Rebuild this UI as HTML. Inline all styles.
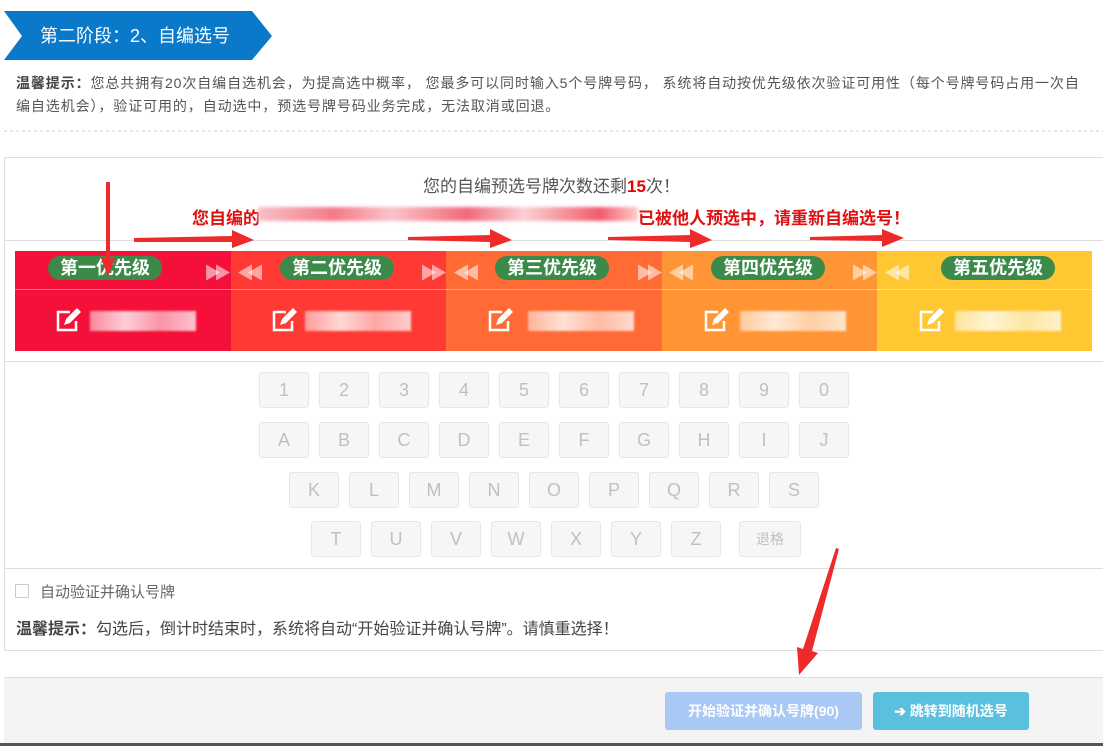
<!DOCTYPE html>
<html><head><meta charset="utf-8"><style>
*{margin:0;padding:0;box-sizing:border-box}
body{width:1103px;height:746px;background:#fff;font-family:"Liberation Sans","Noto Sans CJK SC",sans-serif;position:relative;overflow:hidden;color:#555}
.abs{position:absolute}
.tip{left:16px;top:72px;width:1074px;font-size:14px;line-height:23px;color:#555;letter-spacing:0.9px}
.tip b{color:#444}
.key{position:absolute;width:50px;height:36px;background:#f6f6f6;border:1px solid #e6e6e6;border-radius:3px;color:#c0c0c0;font-size:18px;text-align:center;line-height:34px}
.pill{position:absolute;top:256px;height:24px;border-radius:12px;background:#3b8a4a;color:#fff;font-weight:bold;font-size:18px;line-height:24px;text-align:center;width:114px}
.dbl{position:absolute;top:259px;color:rgba(255,255,255,.55);font-size:17px;font-weight:bold;letter-spacing:-7px}
.blur{position:absolute;top:311px;height:20px;width:106px;background:linear-gradient(90deg,rgba(255,255,255,.5),rgba(255,255,255,.8),rgba(255,255,255,.55),rgba(255,255,255,.75));filter:blur(1px)}
</style></head><body>
<svg class="abs" style="left:0;top:0" width="1103" height="746">
<polygon points="4,11 252,11 272,36 252,60 4,60 22,36" fill="#0b79c9"/>
<line x1="4" y1="131" x2="1103" y2="131" stroke="#ccc" stroke-dasharray="3,3"/>
<rect x="4.5" y="157.5" width="1100" height="493" fill="none" stroke="#ddd"/>
<line x1="4" y1="240.5" x2="1103" y2="240.5" stroke="#ddd"/>
<line x1="4" y1="361.5" x2="1103" y2="361.5" stroke="#ddd"/>
<line x1="4" y1="568.5" x2="1103" y2="568.5" stroke="#ddd"/>
<rect x="4" y="677" width="1099" height="67" fill="#f4f4f4"/>
<line x1="4" y1="677.5" x2="1103" y2="677.5" stroke="#ddd"/>
<rect x="0" y="743" width="1103" height="3" fill="#555"/>
<rect x="15" y="251" width="216" height="100" fill="#f5103a"/>
<rect x="231" y="251" width="215" height="100" fill="#ff3a35"/>
<rect x="446" y="251" width="216" height="100" fill="#ff6a35"/>
<rect x="662" y="251" width="215" height="100" fill="#ff9535"/>
<rect x="877" y="251" width="215" height="100" fill="#ffc832"/>
<line x1="15" y1="289.5" x2="1092" y2="289.5" stroke="rgba(255,255,255,.4)"/>
<rect x="15.5" y="584.5" width="13" height="13" fill="#fff" stroke="#ccc"/>
</svg>
<div class="abs" style="left:40px;top:24px;color:#fff;font-size:18px;line-height:24px">第二阶段：2、自编选号</div>
<div class="abs tip"><b>温馨提示：</b>您总共拥有20次自编自选机会，为提高选中概率， 您最多可以同时输入5个号牌号码， 系统将自动按优先级依次验证可用性（每个号牌号码占用一次自<br>编自选机会），验证可用的，自动选中，预选号牌号码业务完成，无法取消或回退。</div>
<div class="abs" style="left:0;width:1103px;top:172px;text-align:center;font-size:17px;color:#555">您的自编预选号牌次数还剩<b style="color:#e00">15</b>次！</div>
<div class="abs" style="left:192px;top:204px;font-size:17px;font-weight:bold;color:#e01010">您自编的</div>
<div class="abs" style="left:258px;top:207px;width:380px;height:14px;background:linear-gradient(90deg,#f9c0c6,#f47a88 20%,#fbc3ca 35%,#f26a7a 55%,#fbd0d5 70%,#f25c6c 90%,#fcc);filter:blur(1.5px)"></div>
<div class="abs" style="left:638px;top:204px;font-size:17px;font-weight:bold;color:#e01010">已被他人预选中，请重新自编选号！</div>
<div class="pill" style="left:48px">第一优先级</div>
<div class="pill" style="left:280px">第二优先级</div>
<div class="pill" style="left:495px">第三优先级</div>
<div class="pill" style="left:711px">第四优先级</div>
<div class="pill" style="left:941px">第五优先级</div>
<div class="dbl" style="left:204px">▶▶</div><div class="dbl" style="left:237px">◀◀</div>
<div class="dbl" style="left:420px">▶▶</div><div class="dbl" style="left:453px">◀◀</div>
<div class="dbl" style="left:636px">▶▶</div><div class="dbl" style="left:668px">◀◀</div>
<div class="dbl" style="left:851px">▶▶</div><div class="dbl" style="left:884px">◀◀</div>
<svg class="abs" style="left:0;top:0" width="1103" height="746">
<g fill="none" stroke="#fff" stroke-width="2.5">
<path d="M70 312h-12v18h18v-9"/><path d="M286 312h-12v18h18v-9"/><path d="M502 312h-12v18h18v-9"/><path d="M718 312h-12v18h18v-9"/><path d="M933 312h-12v18h18v-9"/>
</g>
<g fill="#fff">
<polygon points="64,325 66,319 77,308 81,312 70,323"/><polygon points="280,325 282,319 293,308 297,312 286,323"/><polygon points="496,325 498,319 509,308 513,312 502,323"/><polygon points="712,325 714,319 725,308 729,312 718,323"/><polygon points="927,325 929,319 940,308 944,312 933,323"/>
</g>
</svg>
<div class="blur" style="left:90px"></div><div class="blur" style="left:305px"></div><div class="blur" style="left:528px"></div><div class="blur" style="left:740px"></div><div class="blur" style="left:955px"></div>
<div id="kb"></div>
<div class="abs" style="left:40px;top:581px;font-size:15px;color:#666">自动验证并确认号牌</div>
<div class="abs" style="left:16px;top:615px;font-size:16px;color:#444"><b>温馨提示：</b>勾选后，倒计时结束时，系统将自动“开始验证并确认号牌”。请慎重选择！</div>
<div class="abs" style="left:665px;top:692px;width:197px;height:38px;background:#aac8f4;border-radius:3px;color:#fff;font-size:14px;font-weight:bold;text-align:center;line-height:38px">开始验证并确认号牌(90)</div>
<div class="abs" style="left:873px;top:692px;width:156px;height:38px;background:#5bc0de;border-radius:3px;color:#fff;font-size:14px;font-weight:bold;text-align:center;line-height:38px">➔ 跳转到随机选号</div>
<svg class="abs" style="left:0;top:0" width="1103" height="746">
<g fill="#ee2a2a">
<polygon points="106,182 110,182 110,258 115,258 108,277 101,258 106,258"/>
<polygon points="134,238 232,236 232,230 254,240 232,248 232,242 134,242"/>
<polygon points="408,237 490,235 490,229 512,240 490,248 490,242 408,240"/>
<polygon points="608,237 690,235 690,229 712,240 690,248 690,242 608,240"/>
<polygon points="810,237 882,235 882,229 904,238 882,247 882,241 810,240"/>
<polygon points="836,548 839,549 812,651 818,653 799,675 797,647 803,649"/>
</g>
</svg>
<script>
var rows=[["1234567890",259,372],["ABCDEFGHIJ",259,422],["KLMNOPQRS",289,472],["TUVWXYZ",311,521]];
var h="";rows.forEach(function(r){for(var i=0;i<r[0].length;i++)h+='<div class="key" style="left:'+(r[1]+i*60)+'px;top:'+r[2]+'px">'+r[0][i]+'</div>';});
h+='<div class="key" style="left:739px;top:521px;width:62px;font-size:14px">退格</div>';
document.getElementById("kb").innerHTML=h;
</script>
</body></html>
